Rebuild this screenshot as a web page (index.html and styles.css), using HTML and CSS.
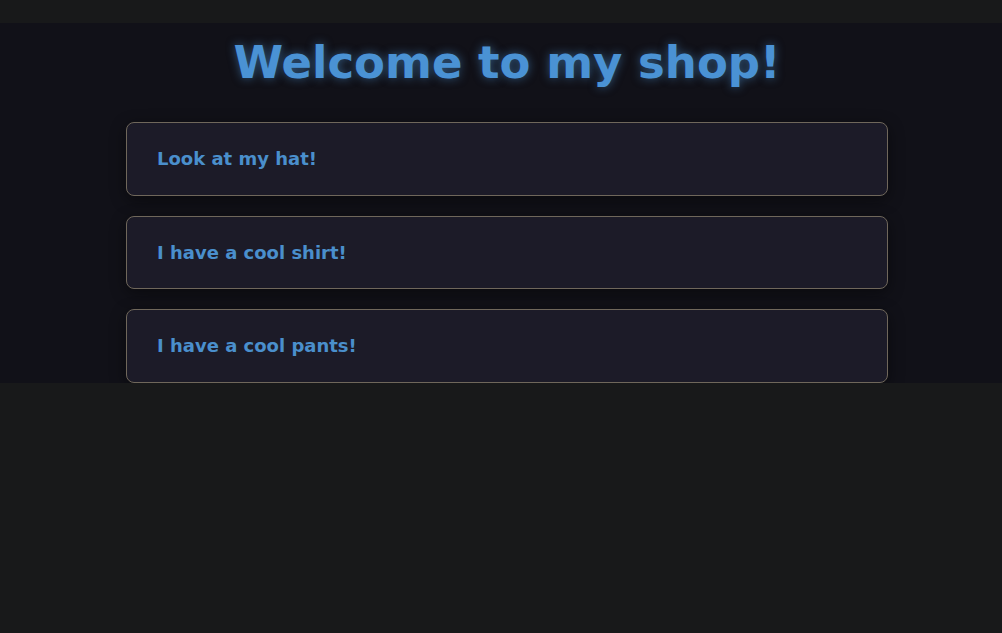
FILE: index.html
```html
<!DOCTYPE html>
<html>
<head>
<meta charset="utf-8">
<link rel="stylesheet" href="styles.css">
</head>
<body>
<div class="topbar"></div>
<section class="shop">
  <h1 class="title">Welcome to my shop!</h1>
  <div class="cards">
    <div class="card">Look at my hat!</div>
    <div class="card">I have a cool shirt!</div>
    <div class="card">I have a cool pants!</div>
  </div>
</section>
</body>
</html>
```
FILE: styles.css
```css
html, body {
  margin: 0;
  padding: 0;
  background: #18191a;
  font-family: "DejaVu Sans", sans-serif;
}
.topbar {
  height: 23px;
}
.shop {
  background: #111118;
  padding: 0 0 0 12px;
  display: flex;
  flex-direction: column;
  align-items: center;
}
.title {
  margin: 0;
  padding: 12px 0 31px;
  font-size: 45px;
  line-height: 56px;
  font-weight: bold;
  color: #4a92d4;
  text-shadow: 0 0 10px rgba(74, 146, 212, 0.55);
}
.cards {
  width: 762px;
  display: flex;
  flex-direction: column;
  gap: 20px;
}
.card {
  box-sizing: border-box;
  height: 73.6px;
  display: flex;
  align-items: center;
  padding: 0 30px;
  background: #1c1b28;
  border: 1px solid #6f675b;
  border-radius: 8px;
  box-shadow: 0 4px 16px rgba(0, 0, 0, 0.45);
  color: #4a8fcc;
  font-size: 18px;
  font-weight: bold;
}
```
